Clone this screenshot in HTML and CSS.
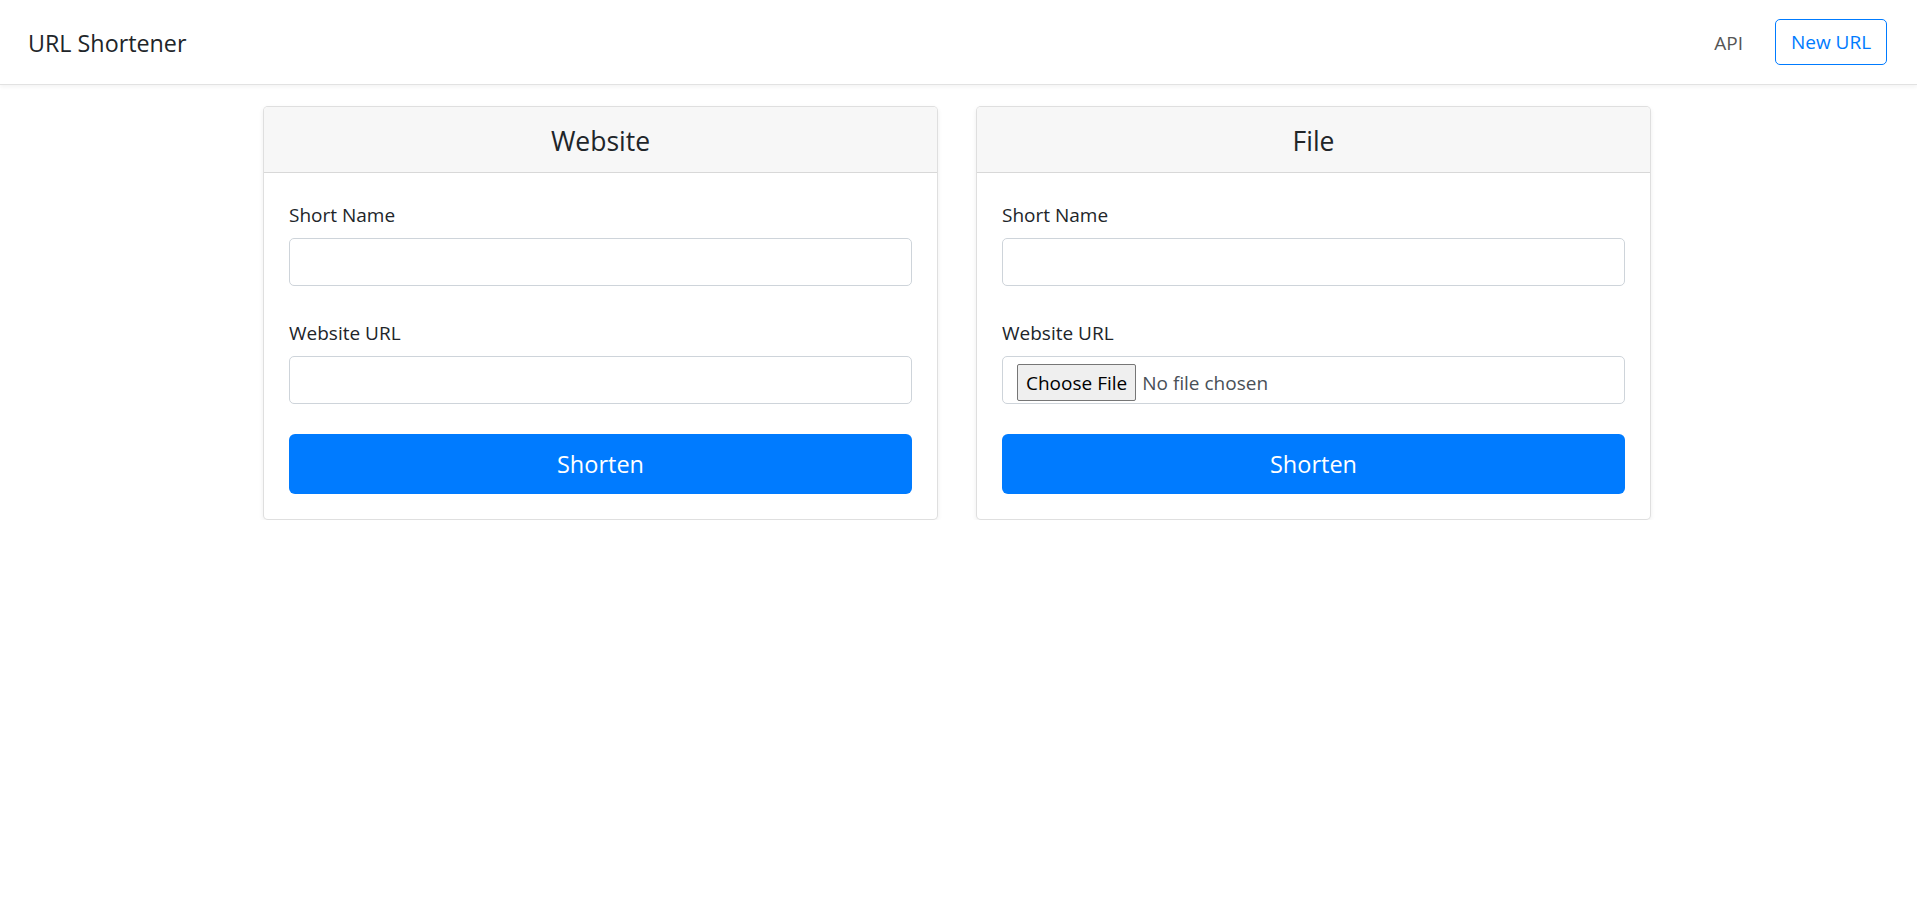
FILE: index.html
```html
<!DOCTYPE html>
<html lang="en">
<head>
<meta charset="utf-8">
<title>URL Shortener</title>
<link rel="stylesheet" href="styles.css">
</head>
<body>
<header class="navbar">
  <a class="brand" href="#">URL Shortener</a>
  <nav class="nav">
    <a class="nav-link" href="#">API</a>
    <a class="btn-outline" href="#">New URL</a>
  </nav>
</header>
<main class="cards">
  <section class="card">
    <div class="card-header"><h4 class="card-title">Website</h4></div>
    <form class="card-body">
      <div class="form-group">
        <label class="label" for="w-name">Short Name</label>
        <input class="form-control" id="w-name" type="text">
      </div>
      <div class="form-group">
        <label class="label" for="w-url">Website URL</label>
        <input class="form-control" id="w-url" type="text">
      </div>
      <button class="btn-primary" type="button">Shorten</button>
    </form>
  </section>
  <section class="card">
    <div class="card-header"><h4 class="card-title">File</h4></div>
    <form class="card-body">
      <div class="form-group">
        <label class="label" for="f-name">Short Name</label>
        <input class="form-control" id="f-name" type="text">
      </div>
      <div class="form-group">
        <label class="label" for="f-file">Website URL</label>
        <input class="form-control file-control" id="f-file" type="file">
      </div>
      <button class="btn-primary" type="button">Shorten</button>
    </form>
  </section>
</main>
</body>
</html>
```
FILE: styles.css
```css
* { box-sizing: border-box; }
html, body { margin: 0; padding: 0; }
body {
  font-family: "Open Sans", "Noto Sans", sans-serif;
  color: #212529;
  background: #fff;
  font-size: 19px;
}
a { text-decoration: none; }

.navbar {
  height: 85px;
  display: flex;
  align-items: center;
  justify-content: space-between;
  padding: 0 30px 0 28px;
  background: #fff;
  border-bottom: 1px solid #e2e2e2;
  box-shadow: 0 2px 4px rgba(0, 0, 0, 0.05);
}
.brand {
  font-size: 23.3px;
  color: #212529;
  line-height: 30px;
  margin-top: 1px;
}
.nav {
  display: flex;
  align-items: center;
}
.nav-link {
  color: #555;
  font-size: 19px;
  padding: 0 10px;
  margin-right: 22px;
  margin-top: 1px;
}
.btn-outline {
  display: flex;
  align-items: center;
  justify-content: center;
  width: 112px;
  height: 46px;
  border: 1px solid #007bff;
  border-radius: 5px;
  color: #007bff;
  font-size: 19px;
  margin-top: -1px;
}

.cards {
  display: flex;
  justify-content: center;
  gap: 38px;
  margin-top: 21px;
  padding-right: 3px;
}
.card {
  width: 675px;
  border: 1px solid rgba(0, 0, 0, 0.125);
  border-radius: 5px;
  background: #fff;
  overflow: hidden;
  box-shadow: 0 2px 5px rgba(0, 0, 0, 0.07);
}
.card-header {
  height: 66px;
  background: #f7f7f7;
  border-bottom: 1px solid rgba(0, 0, 0, 0.125);
  padding-top: 4px;
}
.card-title {
  margin: 0;
  text-align: center;
  font-weight: 400;
  font-size: 26.5px;
  line-height: 61px;
  color: #212529;
}
.card-body {
  padding: 25px;
  margin: 0;
}
.form-group {
  margin-bottom: 30px;
}
.form-group + .form-group {
  margin-top: 1px;
}
.label {
  display: block;
  font-size: 19px;
  line-height: 30px;
  padding-top: 2px;
  margin-bottom: 8px;
  color: #212529;
}
.form-control {
  display: block;
  width: 100%;
  height: 48px;
  border: 1px solid #ced4da;
  border-radius: 5px;
  background: #fff;
  font-family: inherit;
  font-size: 19px;
  color: #495057;
  padding: 0 15px;
  margin: 0;
}
.file-control {
  padding: 7px 14px 0;
  line-height: 37px;
}
.file-control::file-selector-button {
  font-family: inherit;
  font-size: 19px;
  color: #000;
  height: 37px;
  padding: 0 8px;
  margin: 0 6px 0 0;
  background: #efefef;
  border: 1px solid #767676;
  border-radius: 2px;
}
.btn-primary {
  display: block;
  width: 100%;
  height: 60px;
  border: 0;
  border-radius: 6px;
  background: #007bff;
  color: #fff;
  font-family: inherit;
  font-size: 23.5px;
  cursor: pointer;
}
```
